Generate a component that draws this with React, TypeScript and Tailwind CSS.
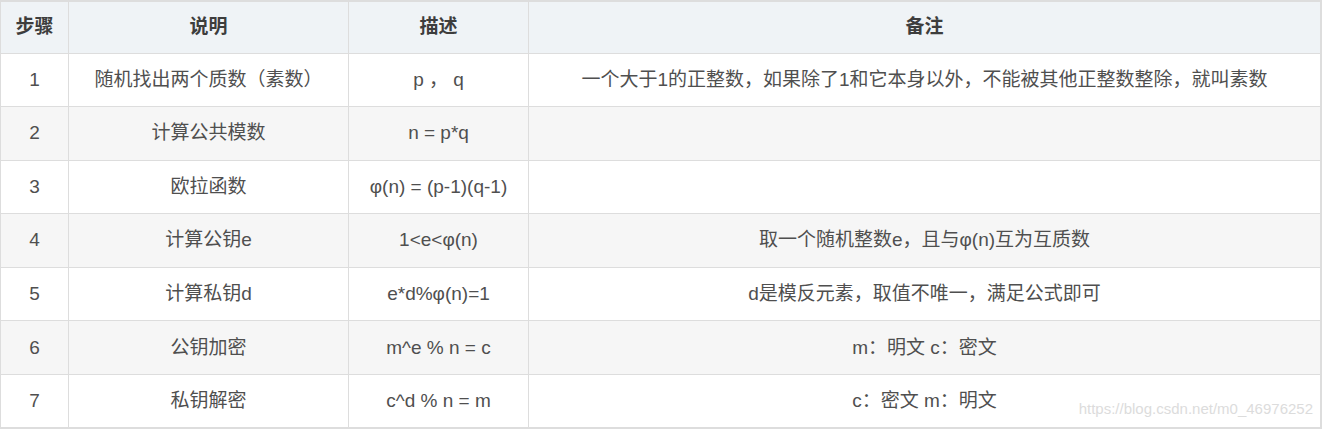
const HEAD = ["步骤", "说明", "描述", "备注"];

const ROWS: [string, string, string, string][] = [
  ["1", "随机找出两个质数（素数）", "p ， q", "一个大于1的正整数，如果除了1和它本身以外，不能被其他正整数整除，就叫素数"],
  ["2", "计算公共模数", "n = p*q", ""],
  ["3", "欧拉函数", "φ(n) = (p-1)(q-1)", ""],
  ["4", "计算公钥e", "1<e<φ(n)", "取一个随机整数e，且与φ(n)互为互质数"],
  ["5", "计算私钥d", "e*d%φ(n)=1", "d是模反元素，取值不唯一，满足公式即可"],
  ["6", "公钥加密", "m^e % n = c", "m：明文 c：密文"],
  ["7", "私钥解密", "c^d % n = m", "c：密文 m：明文"],
];

export default function App() {
  return (
    <div className="relative w-[1323px] h-[430px] bg-white font-['Liberation_Sans','Noto_Sans_CJK_SC',sans-serif] text-[19px] text-[#4f4f4f]">
      <table className="w-[1322px] border-collapse table-fixed border-t-2 border-r-2 border-b-2 border-l border-[#dddddd]">
        <colgroup>
          <col className="w-[68px]" />
          <col className="w-[280px]" />
          <col className="w-[180px]" />
          <col />
        </colgroup>
        <thead>
          <tr className="h-[52px] bg-[#eff3f6]">
            {HEAD.map((h) => (
              <th key={h} className="border border-[#dddddd] text-center font-bold text-[#3d3d3d] p-0">
                {h}
              </th>
            ))}
          </tr>
        </thead>
        <tbody>
          {ROWS.map((r, i) => (
            <tr key={r[0]} className={`h-[53.6px] ${i % 2 === 1 ? "bg-[#f6f6f6]" : "bg-white"}`}>
              {r.map((c, j) => (
                <td key={j} className="border border-[#dddddd] text-center p-0 whitespace-nowrap">
                  {c}
                </td>
              ))}
            </tr>
          ))}
        </tbody>
      </table>
      {/* watermark */}
      <span className="absolute right-[10px] top-[399px] text-[15px] leading-[20px] text-[#dcdcdc] font-['Liberation_Sans',sans-serif]">
        https://blog.csdn.net/m0_46976252
      </span>
    </div>
  );
}
